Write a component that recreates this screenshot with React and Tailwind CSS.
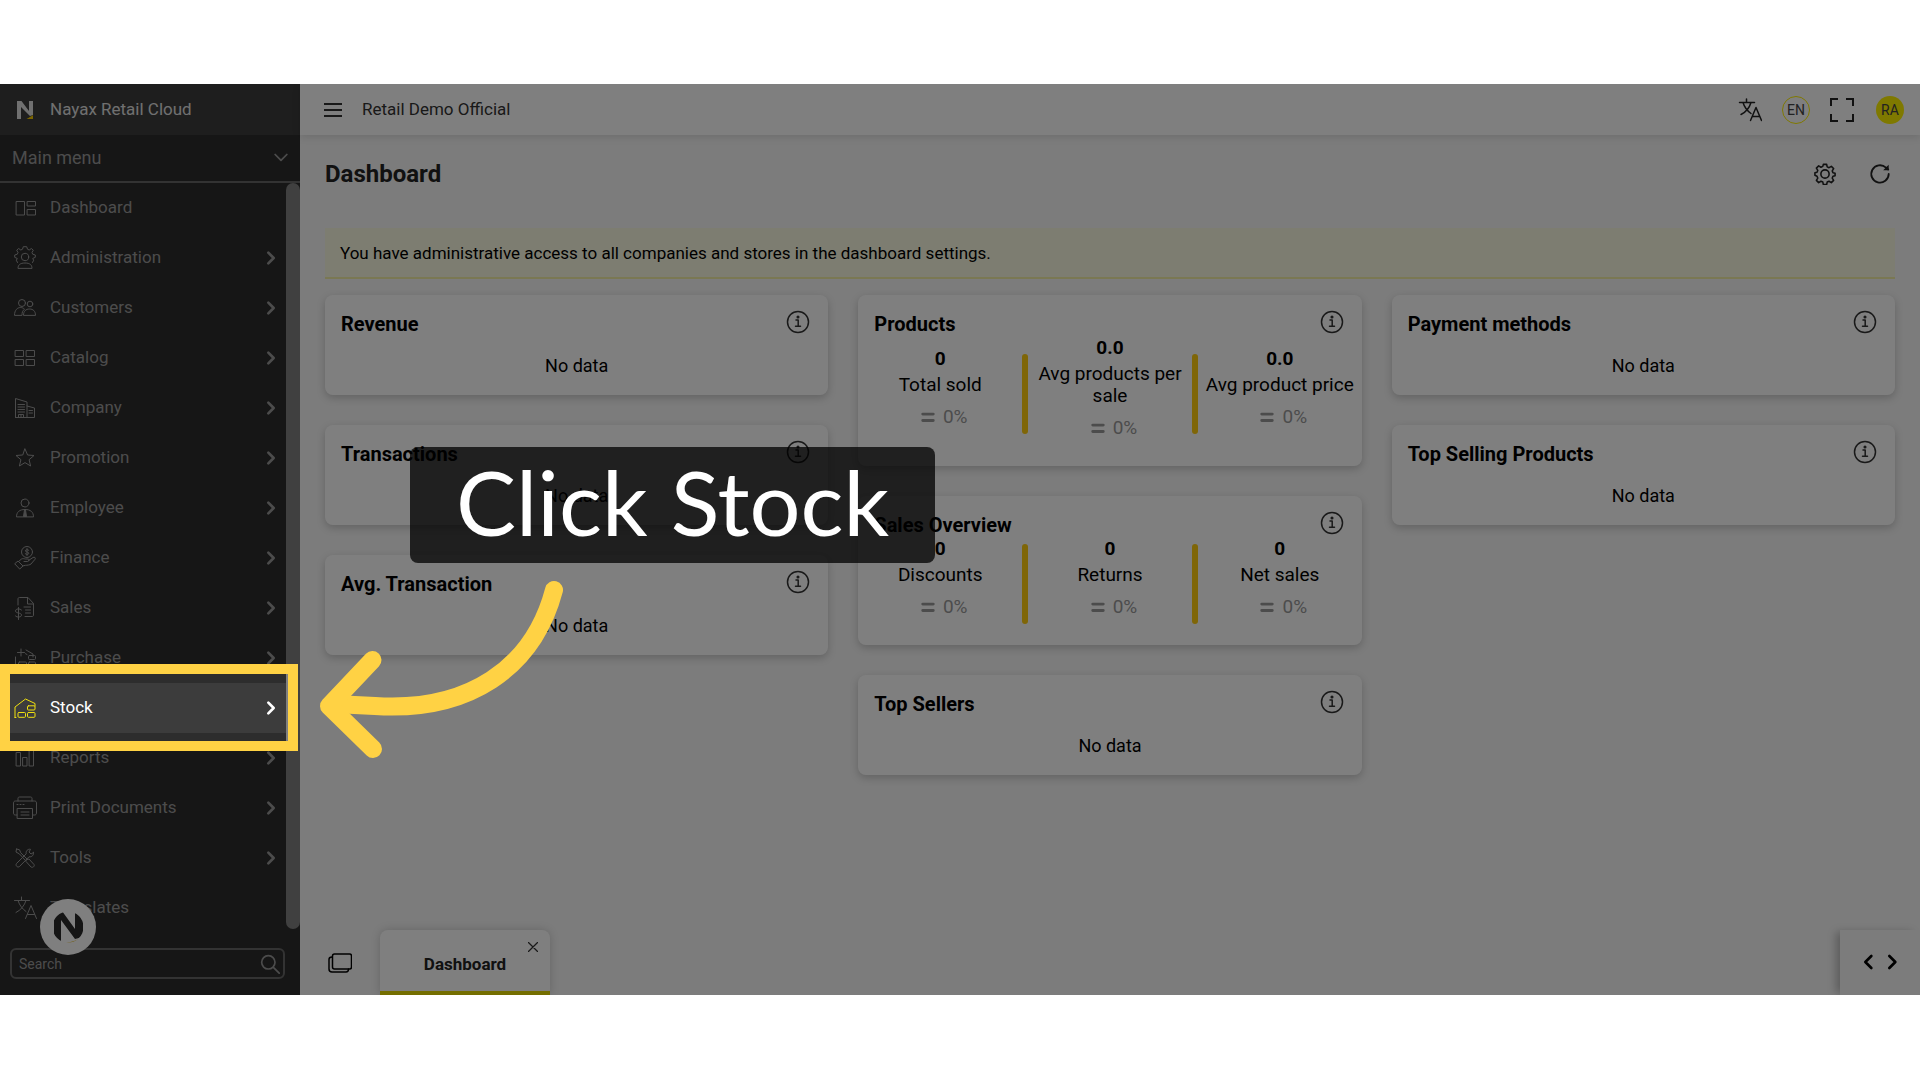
import React, { useState } from 'react';

const Icon = ({ size = 24, width = 1, className = '', children }) => (
  <svg
    width={size}
    height={size}
    viewBox="0 0 24 24"
    fill="none"
    stroke="currentColor"
    strokeWidth={width}
    strokeLinecap="round"
    strokeLinejoin="round"
    className={`shrink-0 ${className}`}
    aria-hidden="true"
  >
    {children}
  </svg>
);

const TranslateShape = () => (
  <>
    <path d="M1.5 4.5h15M8.5 1v3.5M13 4.5c-1.5 5-5 9.5-10 12M5 4.5c1.5 5 4.5 8.500 8 11" />
    <path d="M12.500 22.500 18 9.500l5.500 13M14.500 18.500h7" />
  </>
);

const SHAPES = {
  dashboard: (
    <>
      <rect x="3.500" y="5.500" width="8" height="13.500" />
      <rect x="14.500" y="5.500" width="8" height="4.500" />
      <rect x="14.500" y="13.500" width="8" height="5.500" />
    </>
  ),
  administration: (
    <>
      <circle cx="12" cy="11" r="3.700" />
      <path d="M5 22c0-3 2-5 7-5s7 2 7 5z" />
      <path d="M4.500 16.500 3.300 14.200l1-1.700-2.600-1.200V9l2.600-.8.7-1.700-1.300-2.300 1.900-1.700L7.800 4l1.700-.8.8-2.500h3.400l.8 2.500 1.700.8 2.200-1.500 1.900 1.700L19 6.500l.7 1.700 2.600.8v2.300l-2.600 1.200 1 1.700-1.200 2.300" />
    </>
  ),
  customers: (
    <>
      <circle cx="9" cy="7" r="3.500" />
      <circle cx="17" cy="8" r="2.800" />
      <path d="M1.500 19c0-5 3-7.500 6-7.500 1.500 0 3 .6 4 1.800C9.500 14.500 9 16.500 9 19z" />
      <path d="M10.500 19c0-4 2.500-6 6-6s6 2 6 6z" />
    </>
  ),
  catalog: (
    <>
      <rect x="2.500" y="4.500" width="8" height="6" />
      <rect x="13.500" y="4.500" width="8" height="6" />
      <rect x="2.500" y="13.500" width="8" height="6" />
      <rect x="13.500" y="13.500" width="8" height="6" />
    </>
  ),
  company: (
    <>
      <path d="M2.500 21.500v-19l11.500 3.500v15.500M14 10l7.500 2v9.500h-19" />
      <path d="M5 8.500h6.500M5 11h6.500M5 13.500h6.500M5 16h6.500M16 14.500h3.500M16 17h3.500M5.500 21.500v-3h5v3M8 18.500v3" />
    </>
  ),
  promotion: <path d="m12 3 2.600 6 6.400.5-4.900 4.200 1.500 6.300-5.600-3.400L6.400 20l1.500-6.300L3 9.500 9.400 9z" />,
  employee: (
    <>
      <circle cx="12" cy="7" r="4" />
      <path d="M3.500 20.500c0-4.500 3-7 8.500-7s8.500 2.500 8.500 7z" />
      <path d="m11.500 14-1 6.500h3l-1-6.500z" fill="currentColor" />
    </>
  ),
  finance: (
    <>
      <circle cx="14" cy="6" r="5.500" />
      <path d="M15.800 4.300c-1-1-3.500-.8-3.500.6s3.500.8 3.500 2.300-2.600 1.600-3.600.5M14 2.500v7" />
      <path d="m2 17.500 3-2.500 5 5-3 2.800zM5.500 15.500l3-2.500c1-.6 2.500-.3 4 0h3c1 1 .5 2.200-.8 2.500H11M15.500 14.500l4.500-3c1.500-.8 3 .3 2 1.800L18 18c-1 1-4 1.300-5.500 1.300L9.500 20" />
    </>
  ),
  sales: (
    <>
      <path d="M5 9V3c0-1 .5-1.500 1.500-1.500H15l5.500 6V19c0 1-.5 1.500-1.500 1.500h-7M14.500 2v6h6" />
      <path d="M11 11h6.500M12.500 14h5M12.500 17h5" />
      <path d="M8.500 14c-1.500-1.700-6-1.500-6 1s6 1.500 6 4-4.500 2.700-6 1M5.500 11.500v12" />
    </>
  ),
  purchase: (
    <>
      <path d="M8 3v7M4.500 6.500h7M2.500 11v10h3M13 4l7 4v3M14 8.500l-1.500-.8" />
      <rect x="15.500" y="9.500" width="7" height="4" rx="1" />
      <rect x="5.500" y="16" width="8" height="5" rx="1" />
      <rect x="15.500" y="16" width="7" height="5" rx="1" />
    </>
  ),
  stock: (
    <>
      <path d="M2 21.500V11l10.500-8L22 7.500v2.500" />
      <path d="M2 21.500h1" />
      <rect x="14.500" y="9.800" width="7.500" height="4.200" rx="1" />
      <rect x="5" y="16.500" width="7.500" height="4.800" rx="1" />
      <rect x="14.500" y="16.500" width="7.500" height="4.800" rx="1" />
    </>
  ),
  reports: (
    <>
      <rect x="3.500" y="6.500" width="4" height="13.500" />
      <rect x="10" y="11.500" width="4" height="8.500" />
      <rect x="16.500" y="4.500" width="4" height="15.500" />
    </>
  ),
  print: (
    <>
      <path d="M5 5V2.500C5 1.500 5.500 1 6.500 1h11c1 0 1.500.5 1.500 1.500V5M4 19H2.500C1.200 19 .5 18.300.5 17V7c0-1.300.7-2 2-2h19c1.300 0 2 .7 2 2v10c0 1.300-.7 2-2 2H20" />
      <path d="M4.500 12.500h15v10h-15zM8 16h8M8 19h8M4 8.500h1M7 8.500h1M10 8.500h1" />
    </>
  ),
  tools: (
    <>
      <path d="m3.500 3 3 .8 1.200 2.900L14 13M3.500 3 3 6l3.500 2 6 6.500M14 13.500l2-.5 5 5.500c1 2-1.500 3.500-3 2.500l-5-5.500z" />
      <path d="M20.500 6.500 18 8l-2-2 1.500-2.700c-2.500-.6-5 1.700-4.300 4.500L3.500 17.500c-1.500 2 1 4.500 3 3l9.500-9.700c3 .5 5-1.800 4.500-4.300z" />
    </>
  ),
  translates: <TranslateShape />,
};

const MENU = [
  { label: 'Dashboard', icon: 'dashboard', leaf: true },
  { label: 'Administration', icon: 'administration' },
  { label: 'Customers', icon: 'customers' },
  { label: 'Catalog', icon: 'catalog' },
  { label: 'Company', icon: 'company' },
  { label: 'Promotion', icon: 'promotion' },
  { label: 'Employee', icon: 'employee' },
  { label: 'Finance', icon: 'finance' },
  { label: 'Sales', icon: 'sales' },
  { label: 'Purchase', icon: 'purchase' },
  { label: 'Stock', icon: 'stock', active: true },
  { label: 'Reports', icon: 'reports' },
  { label: 'Print Documents', icon: 'print' },
  { label: 'Tools', icon: 'tools' },
  { label: 'Translates', icon: 'translates', leaf: true },
];

const Logo = ({ size, className }) => (
  <svg width={size} height={size} viewBox="0 0 20 20" className={className} aria-hidden="true">
    <path d="M2 1h4.500l7.500 10V1h4v14l-3 1L6 7v12H2z" fill="currentColor" />
    <path d="M11.500 19 18 15.200V19z" fill="#f5c800" />
  </svg>
);

// Same mark, cropped to a disc for the floating button
const RoundLogo = () => (
  <svg width="32" height="32" viewBox="0 0 32 32" aria-hidden="true">
    <clipPath id="disc">
      <circle cx="16" cy="16" r="15.500" />
    </clipPath>
    <g clipPath="url(#disc)">
      <path d="M2 0h8l13 18V0h8v26l-8 2L9 9v23H2z" fill="currentColor" />
      <path d="M14 32c6-1 12-3 17-7v7z" fill="#e0b820" />
    </g>
  </svg>
);

const MenuItem = ({ item }) => (
  <li className={item.active ? 'relative bg-[#3c3c3c] text-white' : 'text-[#999999]'}>
    <a href="#" className="flex h-[50px] items-center gap-[13px] pr-[7px] pl-[13px]">
      <Icon className={item.active ? 'text-[#f0e010]' : ''}>{SHAPES[item.icon]}</Icon>
      <span className="flex-1 text-[17px]">{item.label}</span>
      {!item.leaf && (
        <Icon size={16} width={4}>
          <path d="m8 4 8 8-8 8" />
        </Icon>
      )}
    </a>
    {/* spotlight: everything outside the frame is dimmed by its spread shadow */}
    {item.active && (
      <div className="pointer-events-none absolute -top-[19px] -right-3 -bottom-[18px] left-0 z-20 border-10 border-[#ffd244] shadow-[0_0_0_4000px_rgba(0,0,0,0.5)]" />
    )}
  </li>
);

const Sidebar = () => {
  const [query, setQuery] = useState('');

  return (
    <aside className="flex w-[300px] shrink-0 flex-col bg-[#2d2d2d]">
      <div className="flex h-[51px] items-center gap-[15px] bg-[#3c3c3c] pt-px pl-[15px] text-[#e0e0e0]">
        <Logo size={20} />
        <span className="text-[17px]">Nayax Retail Cloud</span>
      </div>
      <button className="flex h-12 items-center justify-between border-b-2 border-[#666666] pr-3 pl-3 text-lg text-[#999999]">
        Main menu
        <Icon size={14} width={3}>
          <path d="m2 6 10 10L22 6" />
        </Icon>
      </button>
      <div className="flex">
        <ul className="flex-1">
          {MENU.map((item) => (
            <MenuItem key={item.label} item={item} />
          ))}
        </ul>
        <div className="mb-1 w-3.5 rounded-full bg-[#808080]" />
      </div>
      <div className="relative px-2.5 pt-[15px] pb-4">
        <label className="mr-[5px] flex h-[31px] items-center rounded-md border-2 border-[#666666] px-[7px] text-[#999999]">
          <input
            type="text"
            aria-label="Search"
            placeholder="Search"
            value={query}
            onChange={(e) => setQuery(e.target.value)}
            className="min-w-0 flex-1 bg-transparent text-sm placeholder:text-[#999999] outline-none"
          />
          <Icon size={20} width={2} className="-mr-1">
            <circle cx="10" cy="10" r="8" />
            <path d="m16 16 7 7" />
          </Icon>
        </label>
        <button
          aria-label="Nayax"
          className="absolute -top-[34px] left-10 flex size-14 items-center justify-center rounded-full bg-white text-[#2a2a2a]"
        >
          <RoundLogo />
        </button>
      </div>
    </aside>
  );
};

const Card = ({ title, children }) => (
  <section className="rounded-lg bg-white p-4 shadow-[0_3px_8px_rgba(0,0,0,0.2)]">
    <div className="flex h-[26px] items-center justify-between text-black">
      <h2 className="text-xl font-bold">{title}</h2>
      <button aria-label={`${title} info`} className="-mt-1 mr-0.5 text-[#333333]">
        <Icon size={24} width={1.500}>
          <circle cx="12" cy="12" r="10.500" />
          <path d="M10 10h2.200v6M9.500 16.300h5" />
          <circle cx="12" cy="7" r="0.800" fill="currentColor" />
        </Icon>
      </button>
    </div>
    {children || <p className="mt-4 text-center text-lg leading-[26px] text-black">No data</p>}
  </section>
);

const Stats = ({ items }) => (
  <div className="-mx-4 flex items-center">
    {items.map((stat, i) => (
      <React.Fragment key={stat.label}>
        {i > 0 && <div className="h-20 w-1.5 shrink-0 rounded-full bg-[#ffcc11]" />}
        <div className="flex-1 pb-[11px] text-center text-[19px] leading-[22px] text-black">
          <div className="font-bold">{stat.value}</div>
          <div className="mt-1 px-1">{stat.label}</div>
          <div className="mt-2.5 flex items-center justify-center gap-2 pl-2 text-[#999999]">
            <Icon size={14} width={5}>
              <path d="M3 7h18M3 18h18" />
            </Icon>
            0%
          </div>
        </div>
      </React.Fragment>
    ))}
  </div>
);

const Topbar = () => (
  <header className="relative flex h-[51px] items-center bg-white pt-px pr-4 pl-6 shadow-[0_2px_8px_rgba(0,0,0,0.12)]">
    <button aria-label="Toggle menu" className="text-[#333333]">
      <svg width="18" height="14" viewBox="0 0 18 14" stroke="currentColor" strokeWidth="2" aria-hidden="true">
        <path d="M0 1h18M0 7h18M0 13h18" />
      </svg>
    </button>
    <span className="ml-5 text-[17px] text-[#333333]">Retail Demo Official</span>
    <div className="ml-auto flex items-center gap-5 text-[#222222]">
      <button aria-label="Translate">
        <Icon width={1.500}>
          <TranslateShape />
        </Icon>
      </button>
      <button className="size-7 rounded-full border border-[#fff200] text-sm text-[#444444]">EN</button>
      <button aria-label="Full screen">
        <svg width="24" height="24" viewBox="0 0 24 24" fill="none" stroke="currentColor" strokeWidth="2" aria-hidden="true">
          <path d="M1 8V1h7M16 1h7v7M23 16v7h-7M8 23H1v-7" />
        </svg>
      </button>
      <button className="ml-0.5 size-7 rounded-full bg-[#fff200] text-sm text-[#444444]">RA</button>
    </div>
  </header>
);

const TabBar = () => (
  <footer className="flex h-[65px] items-stretch">
    <button aria-label="All tabs" className="flex w-20 items-center justify-center">
      <Icon size={24} width={1.500}>
        <rect x="4.500" y="3" width="19" height="15" rx="2" />
        <path d="M4 6C2 6 1 7 1 8.500V18c0 2 1 3 3 3h14c1.500 0 2.500-1 2.500-3" />
      </Icon>
    </button>
    <div className="relative flex w-[170px] items-center justify-center rounded-t-lg border-b-4 border-[#e8dc00] bg-white pt-2 text-[#222222] shadow-[0_0_10px_rgba(0,0,0,0.18)]">
      <a href="#" className="text-[17px] font-bold">
        Dashboard
      </a>
      <button aria-label="Close tab" className="absolute top-3 right-3 text-[#333333]">
        <Icon size={10} width={3}>
          <path d="m1 1 22 22M23 1 1 23" />
        </Icon>
      </button>
    </div>
    <div className="ml-auto flex w-20 items-center justify-center gap-2 pb-0.5 text-black shadow-[-6px_0_8px_-2px_rgba(0,0,0,0.25)]">
      <button aria-label="Previous tab">
        <Icon size={16} width={4}>
          <path d="m17 3-9 9 9 9" />
        </Icon>
      </button>
      <button aria-label="Next tab">
        <Icon size={16} width={4}>
          <path d="m8 3 9 9-9 9" />
        </Icon>
      </button>
    </div>
  </footer>
);

const PRODUCTS = [
  { value: '0', label: 'Total sold' },
  { value: '0.0', label: 'Avg products per sale' },
  { value: '0.0', label: 'Avg product price' },
];

const OVERVIEW = [
  { value: '0', label: 'Discounts' },
  { value: '0', label: 'Returns' },
  { value: '0', label: 'Net sales' },
];

const Dashboard = () => (
  <main className="flex-1 px-[25px]">
    <div className="flex h-[78px] items-center justify-between text-[#222222]">
      <h1 className="text-2xl font-bold">Dashboard</h1>
      <div className="flex items-center gap-[33px] pr-1">
        <button aria-label="Settings">
          <Icon size={22} width={1.700}>
            <circle cx="12" cy="12" r="4.500" />
            <path d="M10.200 1.500h3.600l.6 2.700 2 .9 2.500-1.500 2.500 2.500-1.500 2.500.8 2 2.300.6v2.600l-2.300.6-.8 2 1.500 2.500-2.500 2.500-2.500-1.500-2 .9-.6 2.700h-3.600l-.6-2.700-2-.9-2.500 1.500-2.500-2.500 1.500-2.500-.8-2L1 13.300v-2.600l2.300-.6.8-2-1.500-2.500 2.500-2.500 2.500 1.500 2-.9z" />
          </Icon>
        </button>
        <button aria-label="Refresh">
          <Icon size={22} width={2}>
            <path d="M21.500 12A9.500 9.500 0 1 1 18.500 5L21 7" />
            <path d="M21.500 2v6h-6z" fill="currentColor" stroke="none" />
          </Icon>
        </button>
      </div>
    </div>
    <p className="mt-[15px] border-b-2 border-[#f4f0a6] bg-[#fbfbe2] px-[15px] pt-[13px] pb-3 text-[17px] leading-6 text-black">
      You have administrative access to all companies and stores in the dashboard settings.
    </p>
    <div className="mt-4 grid grid-cols-3 items-start gap-[30px]">
      <div className="grid gap-[30px]">
        <Card title="Revenue" />
        <Card title="Transactions" />
        <Card title="Avg. Transaction" />
      </div>
      <div className="grid gap-[30px]">
        <Card title="Products">
          <Stats items={PRODUCTS} />
        </Card>
        <Card title="Sales Overview">
          <Stats items={OVERVIEW} />
        </Card>
        <Card title="Top Sellers" />
      </div>
      <div className="grid gap-[30px]">
        <Card title="Payment methods" />
        <Card title="Top Selling Products" />
      </div>
    </div>
  </main>
);

// Callout and arrow float above the dimmed page
const Callout = () => (
  <>
    <div className="absolute top-[363px] left-[410px] z-30 rounded-lg bg-black/75 px-[46px] pb-2 font-[Lato,sans-serif] text-[90px] leading-[108px] text-white">
      Click Stock
    </div>
    <svg
      className="absolute top-[490px] left-[310px] z-30"
      width="260"
      height="190"
      viewBox="310 574 260 190"
      fill="none"
      stroke="#ffd244"
      strokeWidth="18"
      strokeLinecap="round"
      strokeLinejoin="round"
      aria-hidden="true"
    >
      <path d="M554 590C533 669 468 712 375 706L334 704" />
      <path d="M372.500 660 329 706l44 43" />
    </svg>
  </>
);

export default function App() {
  return (
    <div className="flex min-h-screen flex-col bg-white pt-[84px] pb-[85px] font-[Roboto,sans-serif]">
      <div className="relative isolate flex flex-1 overflow-hidden bg-[#f8f8f8]">
        <Sidebar />
        <div className="flex min-w-0 flex-1 flex-col">
          <Topbar />
          <Dashboard />
          <TabBar />
        </div>
        <Callout />
      </div>
    </div>
  );
}
